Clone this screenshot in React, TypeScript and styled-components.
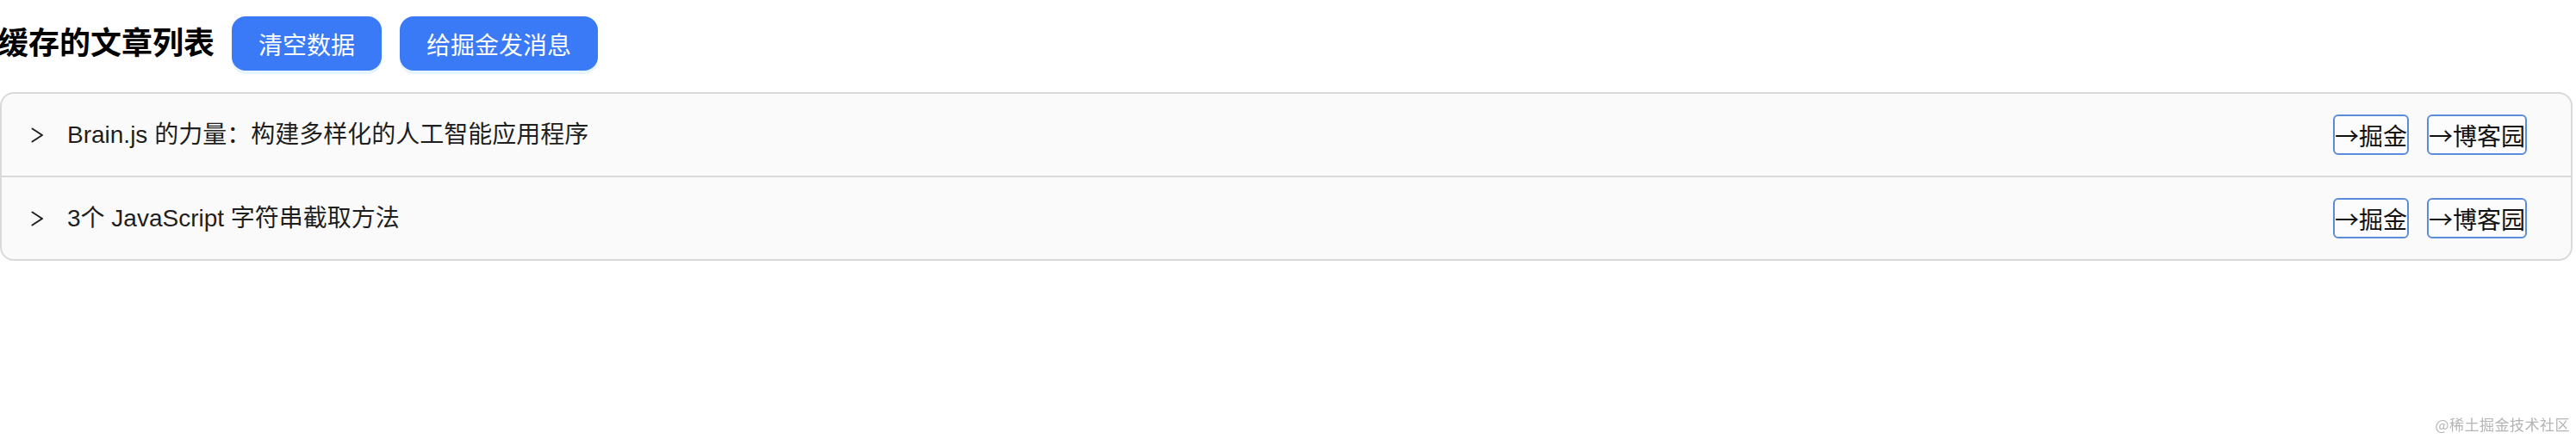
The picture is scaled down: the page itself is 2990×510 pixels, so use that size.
import React from "react";
import styled, { createGlobalStyle } from "styled-components";

const GlobalStyle = createGlobalStyle`
  html, body {
    margin: 0;
    padding: 0;
    background: #ffffff;
  }
  body {
    font-family: "Liberation Sans", "Noto Sans CJK SC", sans-serif;
    color: rgba(0, 0, 0, 0.88);
  }
`;

const Page = styled.div`
  width: 2986px;
  padding: 19px 0 0 0;
  box-sizing: border-box;
`;

const Toolbar = styled.div`
  display: flex;
  align-items: center;
  height: 63px;
`;

const Title = styled.h2`
  margin: 0 20px 0 -3px;
  font-size: 36px;
  font-weight: 700;
  color: #000;
  font-family: "Liberation Sans", "Noto Sans CJK SC", sans-serif;
  line-height: 1;
`;

const PrimaryButton = styled.button`
  height: 63px;
  padding: 0 31px;
  margin-right: 21px;
  border: none;
  border-radius: 16px;
  background: #3a7af6;
  color: #fff;
  font-size: 28px;
  font-family: "Liberation Sans", "Noto Sans CJK SC", sans-serif;
  box-shadow: 0 4px 0 rgba(5, 145, 255, 0.1);
  cursor: pointer;
`;

const Collapse = styled.div`
  margin-top: 25px;
  border: 2px solid #d9d9d9;
  border-radius: 16px;
  overflow: hidden;
  background: #fafafa;
`;

const Item = styled.div<{ $last?: boolean }>`
  border-bottom: ${(p) => (p.$last ? "none" : "2px solid #d9d9d9")};
`;

const Header = styled.div`
  display: flex;
  align-items: center;
  padding: 24px 32px 24px 30px;
  height: 47px;
  box-sizing: content-box;
`;

const Arrow = styled.span`
  display: inline-flex;
  align-items: center;
  width: 24px;
  height: 24px;
  margin-right: 22px;
  color: rgba(0, 0, 0, 0.88);
`;

const HeaderText = styled.span`
  flex: 1;
  font-size: 28px;
  line-height: 44px;
  color: rgba(0, 0, 0, 0.9);
`;

const Extra = styled.div`
  display: flex;
  align-items: center;
`;

const LinkButton = styled.button`
  height: 47px;
  padding: 0;
  margin-right: 21px;
  border: 2px solid #5d8bdb;
  border-radius: 6px;
  background: #fcfcfc;
  color: #111;
  font-size: 28px;
  line-height: 1;
  font-family: "Noto Sans CJK SC", sans-serif;
  cursor: pointer;
  &:last-child {
    margin-right: 19px;
  }
`;

const Watermark = styled.div`
  position: fixed;
  right: 7px;
  bottom: 5px;
  font-size: 17px;
  color: #b5b5b5;
  font-family: "Noto Sans CJK SC", sans-serif;
  letter-spacing: 0.5px;
`;

const ChevronRight = () => (
  <svg width="24" height="24" viewBox="0 0 24 24" fill="none">
    <polyline
      points="5.5,4.5 17,12 5.5,19.5"
      stroke="currentColor"
      strokeWidth="2"
      strokeLinecap="round"
      strokeLinejoin="round"
    />
  </svg>
);

const articles = [
  "Brain.js 的力量：构建多样化的人工智能应用程序",
  "3个 JavaScript 字符串截取方法",
];

export default function App() {
  return (
    <>
      <GlobalStyle />
      <Page>
        <Toolbar>
          <Title>缓存的文章列表</Title>
          <PrimaryButton>清空数据</PrimaryButton>
          <PrimaryButton>给掘金发消息</PrimaryButton>
        </Toolbar>
        <Collapse>
          {articles.map((title, i) => (
            <Item key={title} $last={i === articles.length - 1}>
              <Header>
                <Arrow>
                  <ChevronRight />
                </Arrow>
                <HeaderText>{title}</HeaderText>
                <Extra>
                  <LinkButton>→掘金</LinkButton>
                  <LinkButton>→博客园</LinkButton>
                </Extra>
              </Header>
            </Item>
          ))}
        </Collapse>
      </Page>
      <Watermark>@稀土掘金技术社区</Watermark>
    </>
  );
}
